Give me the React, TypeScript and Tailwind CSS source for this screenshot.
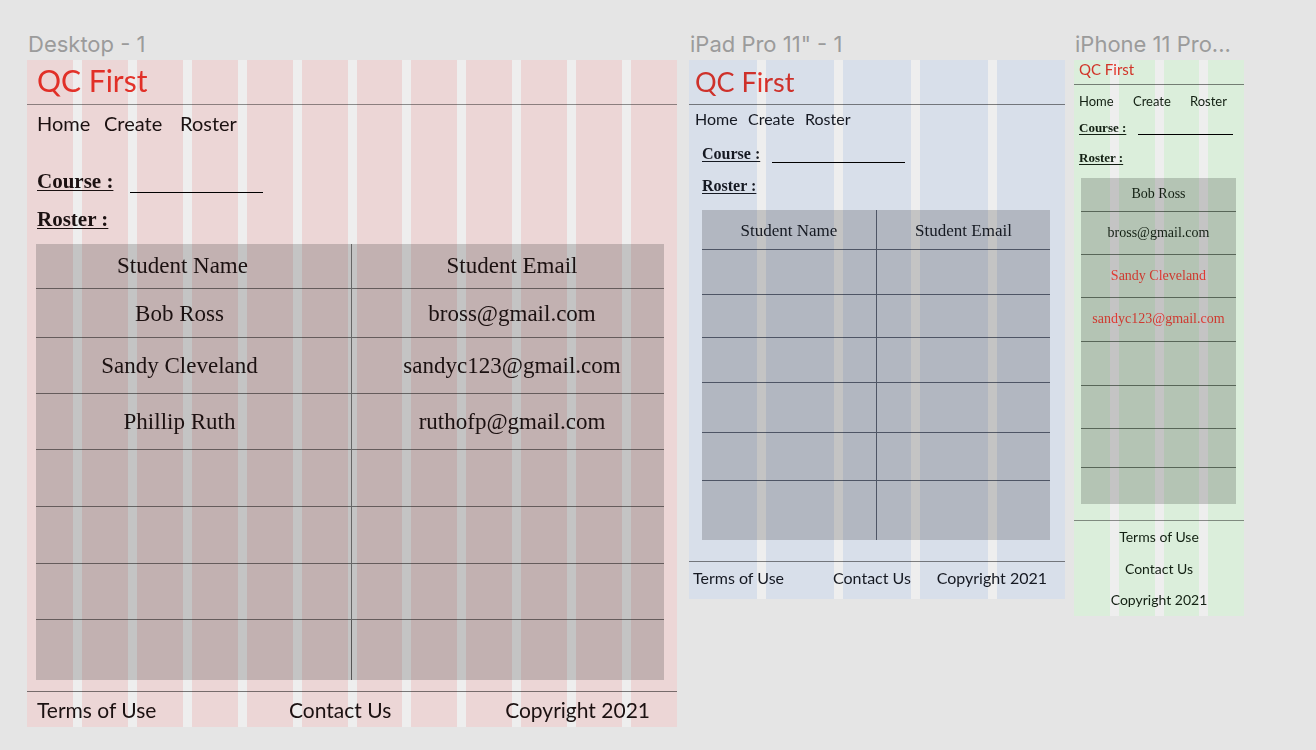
import React from 'react';

/**
 * Canvas with three responsive frames (desktop / tablet / phone) and their layout grids.
 */

const SANS = 'font-[family-name:Lato,sans-serif]';
const SERIF = "font-[family-name:'Liberation_Serif',serif]";

interface GridOverlayProps {
  /** grid-cols-* class */
  cols: string;
  /** column fill class */
  fill: string;
  count: number;
}

// Layout grid drawn over the frame, like the design tool does
const GridOverlay = ({ cols, fill, count }: GridOverlayProps) => (
  <div className={`pointer-events-none absolute inset-0 grid gap-x-[9px] mix-blend-multiply ${cols}`}>
    {Array.from({ length: count }).map((_, i) => (
      <div key={i} className={fill} />
    ))}
  </div>
);

const FrameLabel = ({ children }: { children: React.ReactNode }) => (
  <div className="h-[28px] whitespace-nowrap pl-[1px] font-[family-name:Inter,sans-serif] text-[22px] leading-[24px] text-[#9b9b9b]">
    {children}
  </div>
);

const desktopRows = [
  { h: 'h-[49px]', name: 'Bob Ross', email: 'bross@gmail.com' },
  { h: 'h-[56px]', name: 'Sandy Cleveland', email: 'sandyc123@gmail.com' },
  { h: 'h-[56px]', name: 'Phillip Ruth', email: 'ruthofp@gmail.com' },
  { h: 'h-[57px]', name: '', email: '' },
  { h: 'h-[57px]', name: '', email: '' },
  { h: 'h-[56px]', name: '', email: '' },
];

const DesktopFrame = () => (
  <div className="relative isolate flex h-[667px] w-[650px] flex-col bg-[#eeeeee] text-[#1b1212]">
    <div className="h-[45px] border-b border-[#8c8c8c] pl-[10px]">
      <span className={`${SANS} block text-[30px] leading-[40px] text-[#e3342b]`}>QC First</span>
    </div>

    <nav className={`${SANS} mt-[6px] flex pl-[10px] text-[20px] leading-[25px]`}>
      <span className="w-[67px]">Home</span>
      <span className="w-[76px]">Create</span>
      <span>Roster</span>
    </nav>

    <div className={`${SERIF} mt-[33px] flex pl-[10px] text-[21px] font-bold leading-[24px]`}>
      <span className="w-[93px] underline decoration-1 underline-offset-2">Course :</span>
      <div className="h-[24px] w-[133px] border-b border-black" />
    </div>
    <div className={`${SERIF} mt-[14px] pl-[10px] text-[21px] font-bold leading-[24px]`}>
      <span className="underline decoration-1 underline-offset-2">Roster :</span>
    </div>

    <div className={`${SERIF} ml-[9px] mt-[13px] flex h-[436px] w-[628px] flex-col bg-[#c4c4c4] text-[23px] leading-none`}>
      <div className="grid h-[45px] grid-cols-[316px_1fr] border-b border-[#666666]">
        <div className="flex items-center justify-center border-r border-[#666666] pb-[2px] pr-[22px]">Student Name</div>
        <div className="flex items-center justify-center pb-[2px] pl-[8px]">Student Email</div>
      </div>
      {desktopRows.map((r, i) => (
        <div key={i} className={`grid grid-cols-[316px_1fr] border-b border-[#666666] ${r.h}`}>
          <div className="flex items-center justify-center border-r border-[#666666] pr-[28px]">{r.name}</div>
          <div className="flex items-center justify-center pl-[8px]">{r.email}</div>
        </div>
      ))}
      <div className="grid flex-1 grid-cols-[316px_1fr]">
        <div className="border-r border-[#555555]" />
        <div />
      </div>
    </div>

    <footer className={`${SANS} mt-[11px] flex border-t border-[#777777] pl-[10px] pr-[27px] pt-[5px] text-[21px] leading-[25px]`}>
      <span className="w-[252px]">Terms of Use</span>
      <span>Contact Us</span>
      <span className="ml-auto">Copyright 2021</span>
    </footer>

    <GridOverlay cols="grid-cols-12" fill="bg-[#fde6e6]" count={12} />
  </div>
);

const tabletRowHeights = ['h-[45px]', 'h-[43px]', 'h-[45px]', 'h-[50px]', 'h-[48px]'];

const TabletFrame = () => (
  <div className="relative isolate flex h-[539px] w-[376px] flex-col bg-[#eeeeee] text-[#171a22]">
    <div className="h-[45px] border-b border-[#7d7d7d] pl-[6px] pt-[4px]">
      <span className={`${SANS} block text-[27px] leading-[36px] text-[#e3342b]`}>QC First</span>
    </div>

    <nav className={`${SANS} mt-[4px] flex pl-[6px] text-[16px] leading-[19px]`}>
      <span className="w-[53px]">Home</span>
      <span className="w-[57px]">Create</span>
      <span>Roster</span>
    </nav>

    <div className={`${SERIF} mt-[17px] flex pl-[13px] text-[16px] font-bold leading-[18px]`}>
      <span className="w-[70px] underline decoration-1 underline-offset-2">Course :</span>
      <div className="h-[18px] w-[133px] border-b border-black" />
    </div>
    <div className={`${SERIF} mt-[14px] pl-[13px] text-[16px] font-bold leading-[18px]`}>
      <span className="underline decoration-1 underline-offset-2">Roster :</span>
    </div>

    <div className={`${SERIF} ml-[13px] mt-[15px] flex h-[330px] w-[348px] flex-col bg-[#c4c4c4] text-[17px] leading-none`}>
      <div className="grid h-[40px] grid-cols-[175px_1fr] border-b border-[#555a66]">
        <div className="flex items-center justify-center border-r border-[#555a66] pt-[2px]">Student Name</div>
        <div className="flex items-center justify-center pt-[2px]">Student Email</div>
      </div>
      {tabletRowHeights.map((h, i) => (
        <div key={i} className={`grid grid-cols-[175px_1fr] border-b border-[#555a66] ${h}`}>
          <div className="border-r border-[#555a66]" />
          <div />
        </div>
      ))}
      <div className="grid flex-1 grid-cols-[175px_1fr]">
        <div className="border-r border-[#555a66]" />
        <div />
      </div>
    </div>

    <footer className={`${SANS} mt-[21px] flex border-t border-[#7d7d7d] pl-[4px] pr-[18px] pt-[6px] text-[16px] leading-[19px]`}>
      <span className="w-[140px]">Terms of Use</span>
      <span>Contact Us</span>
      <span className="ml-auto">Copyright 2021</span>
    </footer>

    <GridOverlay cols="grid-cols-5" fill="bg-[#e8effb]" count={5} />
  </div>
);

const phoneRows = [
  { h: 'h-[34px]', text: 'Bob Ross', red: false },
  { h: 'h-[43px]', text: 'bross@gmail.com', red: false },
  { h: 'h-[43px]', text: 'Sandy Cleveland', red: true },
  { h: 'h-[44px]', text: 'sandyc123@gmail.com', red: true },
  { h: 'h-[44px]', text: '', red: false },
  { h: 'h-[43px]', text: '', red: false },
  { h: 'h-[39px]', text: '', red: false },
];

const PhoneFrame = () => (
  <div className="relative isolate flex h-[556px] w-[170px] flex-col bg-[#eeeeee] text-[#142014]">
    <div className="h-[25px] border-b border-[#7d7d7d] pl-[5px]">
      <span className={`${SANS} block text-[15px] leading-[19px] text-[#e3342b]`}>QC First</span>
    </div>

    <nav className={`${SANS} mt-[8px] flex pl-[5px] text-[13px] leading-[16px]`}>
      <span className="w-[54px]">Home</span>
      <span className="w-[57px]">Create</span>
      <span>Roster</span>
    </nav>

    <div className={`${SERIF} mt-[11px] flex pl-[5px] text-[13px] font-bold leading-[15px]`}>
      <span className="w-[59px] underline decoration-1 underline-offset-2">Course :</span>
      <div className="h-[15px] w-[95px] border-b border-black" />
    </div>
    <div className={`${SERIF} mt-[15px] pl-[5px] text-[13px] font-bold leading-[15px]`}>
      <span className="underline decoration-1 underline-offset-2">Roster :</span>
    </div>

    <div className={`${SERIF} ml-[7px] mt-[13px] flex h-[328px] w-[155px] flex-col bg-[#c4c4c4] text-[14px] leading-none`}>
      {phoneRows.map((r, i) => (
        <div
          key={i}
          className={`flex items-center justify-center border-b border-[#5f665f] ${r.h} ${r.red ? 'text-[#e03a34]' : ''}`}
        >
          {r.text}
        </div>
      ))}
      <div className="flex-1" />
    </div>

    <footer className={`${SANS} mt-[16px] flex flex-col items-center border-t border-[#8a8a8a] text-[14px] leading-[31.6px]`}>
      <span>Terms of Use</span>
      <span>Contact Us</span>
      <span>Copyright 2021</span>
    </footer>

    <GridOverlay cols="grid-cols-4" fill="bg-[#ebffeb]" count={4} />
  </div>
);

const App = () => {
  return (
    <div className="flex h-[750px] w-full items-start bg-[#e5e5e5] pl-[27px]">
      <div className="pt-[32px]">
        <FrameLabel>Desktop - 1</FrameLabel>
        <DesktopFrame />
      </div>
      <div className="ml-[12px] pt-[32px]">
        <FrameLabel>iPad Pro 11" - 1</FrameLabel>
        <TabletFrame />
      </div>
      <div className="ml-[9px] pt-[32px]">
        <FrameLabel>iPhone 11 Pro...</FrameLabel>
        <PhoneFrame />
      </div>
    </div>
  );
};

export default App;
